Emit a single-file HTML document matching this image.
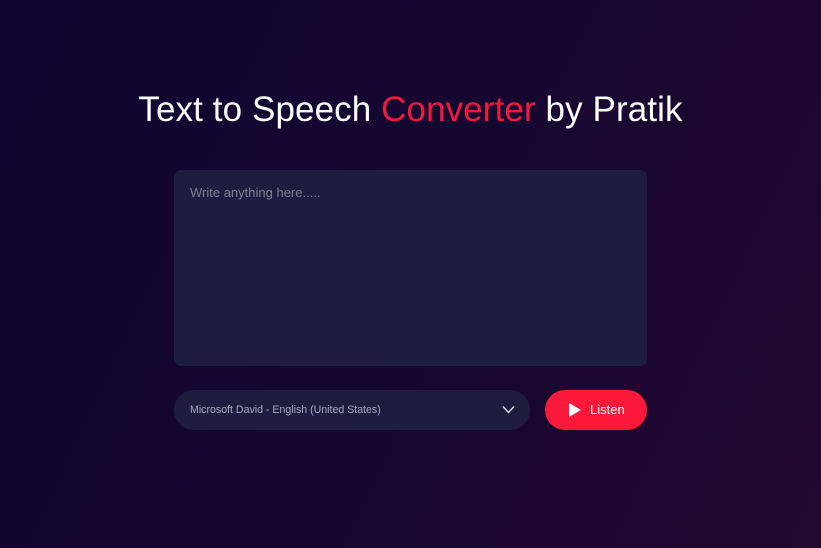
<!DOCTYPE html>
<html><head><style>
body{margin:0;width:821px;height:548px;overflow:hidden;font-family:"Liberation Sans",sans-serif;
background:linear-gradient(115deg,#0f0530 0%,#160730 50%,#22072f 100%);position:relative}
h1{position:absolute;top:90px;left:0;width:821px;text-align:center;margin:0;font-weight:400;font-size:35px;color:#fff;letter-spacing:0.1px}
h1 span{color:#f01a3c}
.ta{position:absolute;left:174px;top:170px;width:473px;height:196px;background:#1f1d3f;border-radius:7px}
.ta div{position:absolute;left:16px;top:15px;color:#7e7d92;font-size:13px}
.sel{position:absolute;left:174px;top:390px;width:356px;height:40px;background:#1f1d3f;border-radius:20px}
.sel span{position:absolute;left:16px;top:14px;font-size:10.6px;color:#a8a8c0}
.sel svg{position:absolute;left:328px;top:15px}
.btn{position:absolute;left:545px;top:390px;width:102px;height:40px;background:#fe1839;border-radius:20px;color:#fff;font-size:13px}
.btn svg{position:absolute;left:24px;top:13px}
.btn span{position:absolute;left:45px;top:12px}
</style></head><body>
<h1>Text to Speech <span>Converter</span> by Pratik</h1>
<div class="ta"><div>Write anything here.....</div></div>
<div class="sel"><span>Microsoft David - English (United States)</span>
<svg width="13" height="9" viewBox="0 0 13 9"><path d="M1 1.5L6.5 7.5L12 1.5" stroke="#ddd" stroke-width="1.4" fill="none"/></svg></div>
<div class="btn"><svg width="12" height="14" viewBox="0 0 12 14"><path d="M0 0L12 7L0 14Z" fill="#fff"/></svg><span>Listen</span></div>
</body></html>
